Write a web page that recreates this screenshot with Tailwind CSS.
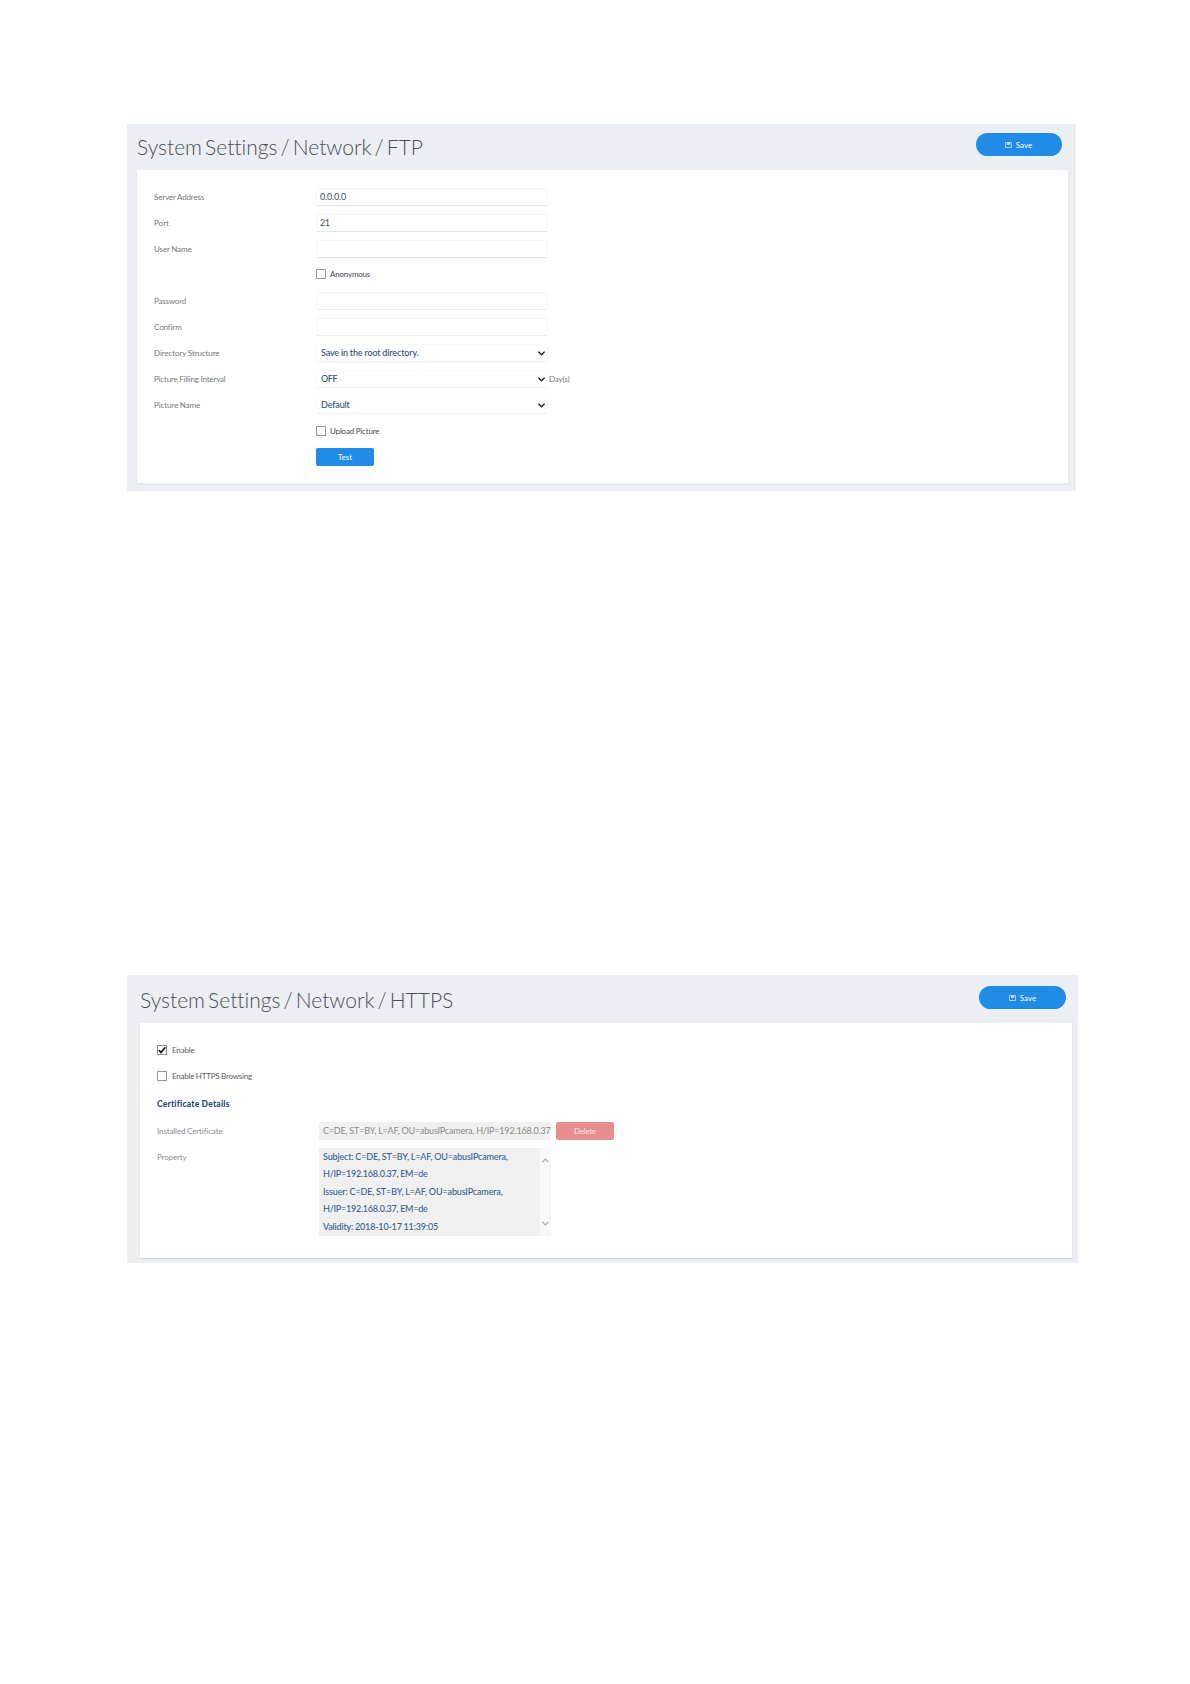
<!DOCTYPE html>
<html lang="en"><head><meta charset="utf-8"><title>System Settings</title>
<script src="https://cdn.jsdelivr.net/npm/@tailwindcss/browser@4"></script></head>
<body class="bg-white font-['Lato',sans-serif] text-[8px] leading-[10px] text-[#77797c] [word-spacing:-0.2px]">
<main class="flex h-[1684px] flex-col gap-[484px] pl-[127px] pt-[124px] whitespace-nowrap">
<!-- FTP settings -->
<section class="h-[367px] w-[949px] bg-[#ebeef3] pl-[10px]">
  <header class="flex h-[46px] items-start justify-between pr-[14px]">
    <h1 class="pt-[9px] text-[21px] leading-[28px] font-light text-[#4b4e57] [word-spacing:-2.6px] [font-variant-ligatures:none]">System Settings / Network / FTP</h1>
    <button class="mt-[9px] flex h-[23px] w-[86px] items-center justify-center gap-1 rounded-full bg-[#208ce5] pr-px text-white"><svg class="h-[6px] w-[7px]" viewBox="0 0 7 6" fill="none" stroke="#c9e2f9" stroke-width=".8"><path d="M.5.5h6v5h-6z"/><path d="M2 .5v2.4h3.2V.5z" fill="#c9e2f9" stroke="none"/></svg>Save</button>
  </header>
  <div class="flex h-[313px] w-[931px] flex-col bg-white pl-[17px] pt-[14px] shadow-[0_1px_2px_#dde2e8]">
    <div class="flex h-[26px] items-center"><label class="w-[162px] tracking-[-0.15px]">Server Address</label><div class="flex h-[18px] w-[232px] items-center rounded-[2px] border border-[#f4f6f6] border-b-[#e1e7ea] pl-[3px] text-[9px] tracking-[-0.18px] text-[#3c4f66]">0.0.0.0</div></div>
    <div class="flex h-[26px] items-center"><label class="w-[162px]">Port</label><div class="flex h-[18px] w-[232px] items-center rounded-[2px] border border-[#f4f6f6] border-b-[#e1e7ea] pl-[3px] text-[9px] tracking-[-0.4px] text-[#3c4f66]">21</div></div>
    <div class="flex h-[26px] items-center"><label class="w-[162px] tracking-[-0.14px]">User Name</label><div class="h-[18px] w-[232px] rounded-[2px] border border-[#f4f6f6] border-b-[#e1e7ea]"></div></div>
    <div class="flex h-[26px] items-center pb-[2px] pl-[162px] tracking-[-0.2px] text-[#46484b]"><i class="mr-[4px] size-[10px] border border-[#96989b]"></i>Anonymous</div>
    <div class="flex h-[26px] items-center"><label class="w-[162px] tracking-[-0.19px]">Password</label><div class="h-[18px] w-[232px] rounded-[2px] border border-[#f4f6f6] border-b-[#e9edef]"></div></div>
    <div class="flex h-[26px] items-center"><label class="w-[162px] tracking-[-0.11px]">Confirm</label><div class="h-[18px] w-[232px] rounded-[2px] border border-[#f4f6f6] border-b-[#e9edef]"></div></div>
    <div class="flex h-[26px] items-center"><label class="w-[162px] tracking-[-0.095px]">Directory Structure</label><div class="flex h-[18px] w-[232px] items-center justify-between rounded-[2px] border border-[#f8f9f9] border-b-[#edf0f2] pl-[4px] pr-[2px] text-[9px] font-medium tracking-[-0.135px] text-[#2a527c]">Save in the root directory.<svg class="h-[5px] w-[7px]" viewBox="0 0 7 5" fill="none" stroke="#222" stroke-width="1.5"><path d="M.4.7 3.5 3.8 6.6.7"/></svg></div></div>
    <div class="flex h-[26px] items-center"><label class="w-[162px] tracking-[-0.175px]">Picture Filling Interval</label><div class="flex h-[18px] w-[232px] items-center justify-between rounded-[2px] border border-[#f8f9f9] border-b-[#edf0f2] pl-[4px] pr-[2px] text-[9px] font-medium tracking-[-0.4px] text-[#2a527c]">OFF<svg class="h-[5px] w-[7px]" viewBox="0 0 7 5" fill="none" stroke="#222" stroke-width="1.5"><path d="M.4.7 3.5 3.8 6.6.7"/></svg></div><span class="ml-px tracking-[-0.15px]">Day(s)</span></div>
    <div class="flex h-[26px] items-center"><label class="w-[162px] tracking-[-0.12px]">Picture Name</label><div class="flex h-[18px] w-[232px] items-center justify-between rounded-[2px] border border-[#f8f9f9] border-b-[#edf0f2] pl-[4px] pr-[2px] text-[9px] font-medium tracking-[-0.12px] text-[#2a527c]">Default<svg class="h-[5px] w-[7px]" viewBox="0 0 7 5" fill="none" stroke="#222" stroke-width="1.5"><path d="M.4.7 3.5 3.8 6.6.7"/></svg></div></div>
    <div class="flex h-[26px] items-center pb-[1px] pl-[162px] tracking-[-0.18px] text-[#46484b]"><i class="mr-[4px] size-[10px] border border-[#96989b]"></i>Upload Picture</div>
    <div class="flex h-[26px] items-center pl-[162px]"><button class="h-[18px] w-[58px] rounded-[2px] bg-[#208ce5] text-white">Test</button></div>
  </div>
</section>
<!-- HTTPS settings -->
<section class="h-[288px] w-[951px] bg-[#ebeef3] pl-[13px]">
  <header class="flex h-[48px] items-start justify-between pr-[12px]">
    <h1 class="pt-[11px] text-[21px] leading-[28px] font-light text-[#4b4e57] [word-spacing:-2.6px] [font-variant-ligatures:none]">System Settings / Network / HTTPS</h1>
    <button class="mt-[11px] flex h-[23px] w-[87px] items-center justify-center gap-1 rounded-full bg-[#208ce5] text-white"><svg class="h-[6px] w-[7px]" viewBox="0 0 7 6" fill="none" stroke="#c9e2f9" stroke-width=".8"><path d="M.5.5h6v5h-6z"/><path d="M2 .5v2.4h3.2V.5z" fill="#c9e2f9" stroke="none"/></svg>Save</button>
  </header>
  <div class="flex h-[235px] w-[932px] flex-col bg-white pl-[17px] pt-[14px] shadow-[0_1px_1px_#ccd6e0]">
    <div class="flex h-[26px] items-center pb-px tracking-[-0.17px] text-[#5b5d60]"><i class="mr-[5px] size-[10px] border border-[#85878a]"><svg class="size-[8px]" viewBox="0 0 8 8" fill="none" stroke="#111" stroke-width="1.7"><path d="M.8 4.2 3 6.5 7.3 1.2"/></svg></i>Enable</div>
    <div class="flex h-[26px] items-center pb-px tracking-[-0.22px] text-[#5b5d60]"><i class="mr-[5px] size-[10px] border border-[#96989b]"></i>Enable HTTPS Browsing</div>
    <h2 class="flex h-[30px] items-center text-[8.5px] font-black tracking-[0.22px] text-[#1f4f80]">Certificate Details</h2>
    <div class="flex h-[24px] items-center"><label class="w-[162px] tracking-[-0.12px] text-[#8a8c8f]">Installed Certificate</label><div class="flex h-[18px] w-[232px] items-center overflow-hidden rounded-[2px] bg-[#f0f0ee] pl-[4px] text-[9px] tracking-[-0.18px] text-[#8a8b8c]">C=DE, ST=BY, L=AF, OU=abusIPcamera, H/IP=192.168.0.37</div><button class="ml-[5px] h-[18px] w-[58px] rounded-[2px] bg-[#e88c8e] tracking-[-0.2px] text-[#fbe6e6]">Delete</button></div>
    <div class="flex items-start pt-[5px]"><label class="w-[162px] pt-[4px] tracking-[-0.14px] text-[#8a8c8f]">Property</label><div class="flex h-[88px] w-[232px] justify-between overflow-hidden rounded-[2px] bg-[#f0f0f1] pl-[4px] text-[9px] leading-[17.4px] font-medium text-[#34618f]"><div><p class="tracking-[-0.16px]">Subject: C=DE, ST=BY, L=AF, OU=abusIPcamera,</p><p class="tracking-[-0.24px]">H/IP=192.168.0.37, EM=de</p><p class="tracking-[-0.14px]">Issuer: C=DE, ST=BY, L=AF, OU=abusIPcamera,</p><p class="tracking-[-0.24px]">H/IP=192.168.0.37, EM=de</p><p class="tracking-[-0.18px]">Validity: 2018-10-17 11:39:05</p></div>
      <div class="flex w-[12px] flex-col items-center justify-between border border-[#f2f2f3] bg-[#f8f8f8] pb-[9px] pt-[9px]"><svg class="h-[5px] w-[7px]" viewBox="0 0 7 5" fill="none" stroke="#a8a9ab" stroke-width="1.2"><path d="M.4 4.2 3.5 1.1 6.6 4.2"/></svg><svg class="h-[5px] w-[7px]" viewBox="0 0 7 5" fill="none" stroke="#a8a9ab" stroke-width="1.2"><path d="M.4.8 3.5 3.9 6.6.8"/></svg></div></div></div>
  </div>
</section>
</main>
</body></html>
